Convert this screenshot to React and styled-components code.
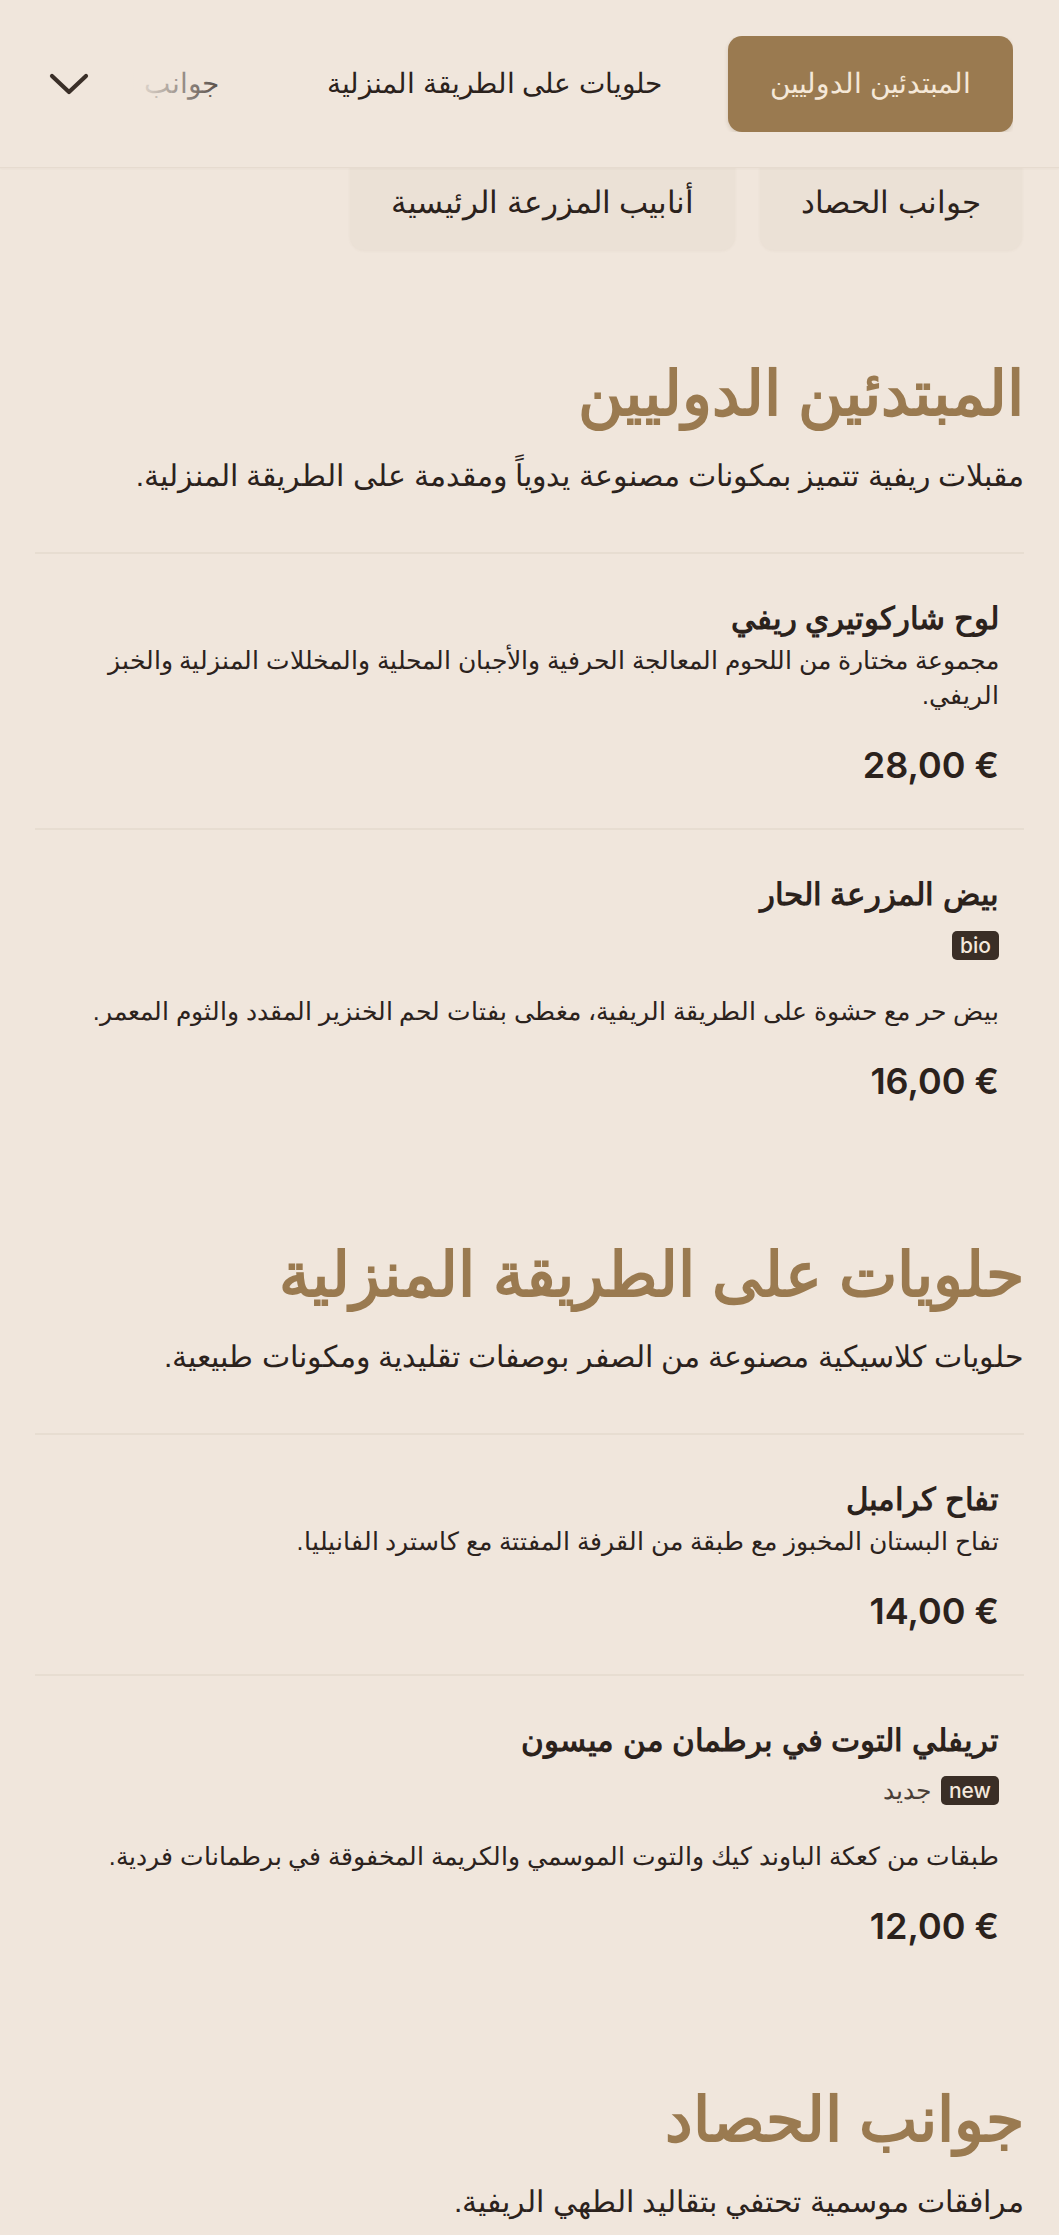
import React from "react";
import styled, { createGlobalStyle } from "styled-components";

const arabic = `Arial, "Liberation Sans", sans-serif`;

const GlobalStyle = createGlobalStyle`
  html, body {
    margin: 0;
    padding: 0;
    background: #f0e6dc;
  }
  body {
    font-family: ${arabic};
    color: #2b221c;
  }
  * {
    box-sizing: border-box;
  }
`;

const Page = styled.main`
  direction: rtl;
  min-height: 2235px;
  background: #f0e6dc;
  overflow: hidden;
`;

const Header = styled.header`
  position: relative;
  z-index: 2;
  height: 168px;
  display: flex;
  align-items: center;
  gap: 14px;
  padding: 0 46px 0 47px;
  background: #f0e6dc;
  border-bottom: 1px solid #e6dbcf;
  box-shadow: 0 1px 2px rgba(120, 95, 60, 0.05);
`;

const TabStrip = styled.nav`
  position: relative;
  flex: 1;
  display: flex;
  align-items: center;
  gap: 24px;
  overflow: hidden;
  white-space: nowrap;

  &::after {
    content: "";
    position: absolute;
    left: 0;
    top: 0;
    bottom: 0;
    width: 140px;
    background: linear-gradient(to right, #f0e6dc 20%, rgba(240, 230, 220, 0));
    pointer-events: none;
  }
`;

const Tab = styled.button`
  flex: none;
  height: 96px;
  padding: 0 42px;
  border: none;
  border-radius: 14px;
  font-family: ${arabic};
  font-size: 28px;
  background: ${(p) => (p.$active ? "#9a7a50" : "transparent")};
  color: ${(p) => (p.$active ? "#f5e8d8" : "#2b221c")};
  box-shadow: ${(p) =>
    p.$active ? "0 2px 4px rgba(90, 65, 30, 0.18)" : "none"};
`;

const MoreButton = styled.button`
  flex: none;
  width: 44px;
  height: 60px;
  display: flex;
  align-items: center;
  justify-content: center;
  border: none;
  background: transparent;
  color: #3a2f28;
  padding: 0;
`;

const ChipRow = styled.div`
  position: relative;
  z-index: 1;
  display: flex;
  gap: 25px;
  padding: 0 37px;
  margin-top: -14px;
`;

const Chip = styled.button`
  height: 96px;
  padding: 0 41px;
  border: none;
  border-radius: 14px;
  background: #ebe1d6;
  font-family: ${arabic};
  font-size: 31px;
  color: #2b221c;
  box-shadow: 0 1px 3px rgba(120, 95, 60, 0.06);
`;

const Section = styled.section`
  padding: ${(p) => p.$top}px 35px 0;
`;

const SectionTitle = styled.h2`
  margin: 0;
  font-family: ${arabic};
  font-weight: 700;
  font-size: 62px;
  line-height: 1.5;
  color: #9a7a50;
`;

const SectionLead = styled.p`
  margin: 15px 0 0;
  font-size: 30px;
  line-height: 1.4;
  color: #2b221c;
`;

const ItemList = styled.div`
  margin-top: 55px;
`;

const Item = styled.article`
  padding: 45px 25px 41px;
  border-top: 2px solid #e7ddd1;
`;

const ItemName = styled.h3`
  margin: 0;
  font-size: 31px;
  font-weight: 700;
  line-height: 1.3;
  color: #2b221c;
`;

const Tags = styled.div`
  display: flex;
  align-items: center;
  gap: 10px;
  margin-top: 15px;
  margin-bottom: 34px;
`;

const Badge = styled.span`
  display: inline-flex;
  align-items: center;
  height: 29px;
  padding: 0 8px;
  border-radius: 5px;
  background: #3a2e26;
  color: #f3e8dc;
  font-family: Inter, "Liberation Sans", sans-serif;
  font-weight: 500;
  font-size: 21px;
  direction: ltr;
`;

const TagLabel = styled.span`
  font-size: 25px;
  color: #4a3f37;
`;

const Desc = styled.p`
  margin: 4px 0 0;
  font-size: 25px;
  line-height: 1.4;
  color: #2b221c;
`;

const Price = styled.div`
  margin-top: 30px;
  font-family: Inter, "Liberation Sans", sans-serif;
  font-weight: 600;
  font-size: 36px;
  color: #2b221c;
  direction: ltr;
  text-align: right;
`;

const ChevronDown = () => (
  <svg width="40" height="22" viewBox="0 0 40 22" fill="none">
    <path
      d="M3 3 L20 19 L37 3"
      stroke="currentColor"
      strokeWidth="4.2"
      strokeLinecap="round"
      strokeLinejoin="round"
    />
  </svg>
);

const menu = [
  {
    title: "المبتدئين الدوليين",
    lead: "مقبلات ريفية تتميز بمكونات مصنوعة يدوياً ومقدمة على الطريقة المنزلية.",
    top: 97,
    items: [
      {
        name: "لوح شاركوتيري ريفي",
        desc: "مجموعة مختارة من اللحوم المعالجة الحرفية والأجبان المحلية والمخللات المنزلية والخبز الريفي.",
        price: "28,00 €",
      },
      {
        name: "بيض المزرعة الحار",
        badge: "bio",
        desc: "بيض حر مع حشوة على الطريقة الريفية، مغطى بفتات لحم الخنزير المقدد والثوم المعمر.",
        price: "16,00 €",
      },
    ],
  },
  {
    title: "حلويات على الطريقة المنزلية",
    lead: "حلويات كلاسيكية مصنوعة من الصفر بوصفات تقليدية ومكونات طبيعية.",
    top: 84,
    items: [
      {
        name: "تفاح كرامبل",
        desc: "تفاح البستان المخبوز مع طبقة من القرفة المفتتة مع كاسترد الفانيليا.",
        price: "14,00 €",
      },
      {
        name: "تريفلي التوت في برطمان من ميسون",
        badge: "new",
        label: "جديد",
        desc: "طبقات من كعكة الباوند كيك والتوت الموسمي والكريمة المخفوقة في برطمانات فردية.",
        price: "12,00 €",
      },
    ],
  },
  {
    title: "جوانب الحصاد",
    lead: "مرافقات موسمية تحتفي بتقاليد الطهي الريفية.",
    top: 84,
    items: [],
  },
];

export default function App() {
  return (
    <>
      <GlobalStyle />
      <Page>
        <Header>
          <TabStrip>
            <Tab $active>المبتدئين الدوليين</Tab>
            <Tab>حلويات على الطريقة المنزلية</Tab>
            <Tab>جوانب الحصاد</Tab>
            <Tab>أنابيب المزرعة الرئيسية</Tab>
          </TabStrip>
          <MoreButton aria-label="المزيد">
            <ChevronDown />
          </MoreButton>
        </Header>
        <ChipRow>
          <Chip>جوانب الحصاد</Chip>
          <Chip>أنابيب المزرعة الرئيسية</Chip>
        </ChipRow>
        {menu.map((sec) => (
          <Section key={sec.title} $top={sec.top}>
            <SectionTitle>{sec.title}</SectionTitle>
            <SectionLead>{sec.lead}</SectionLead>
            {sec.items.length > 0 && (
              <ItemList>
                {sec.items.map((it) => (
                  <Item key={it.name}>
                    <ItemName>{it.name}</ItemName>
                    {it.badge ? (
                      <Tags>
                        <Badge>{it.badge}</Badge>
                        {it.label && <TagLabel>{it.label}</TagLabel>}
                      </Tags>
                    ) : null}
                    <Desc>{it.desc}</Desc>
                    <Price>{it.price}</Price>
                  </Item>
                ))}
              </ItemList>
            )}
          </Section>
        ))}
      </Page>
    </>
  );
}
